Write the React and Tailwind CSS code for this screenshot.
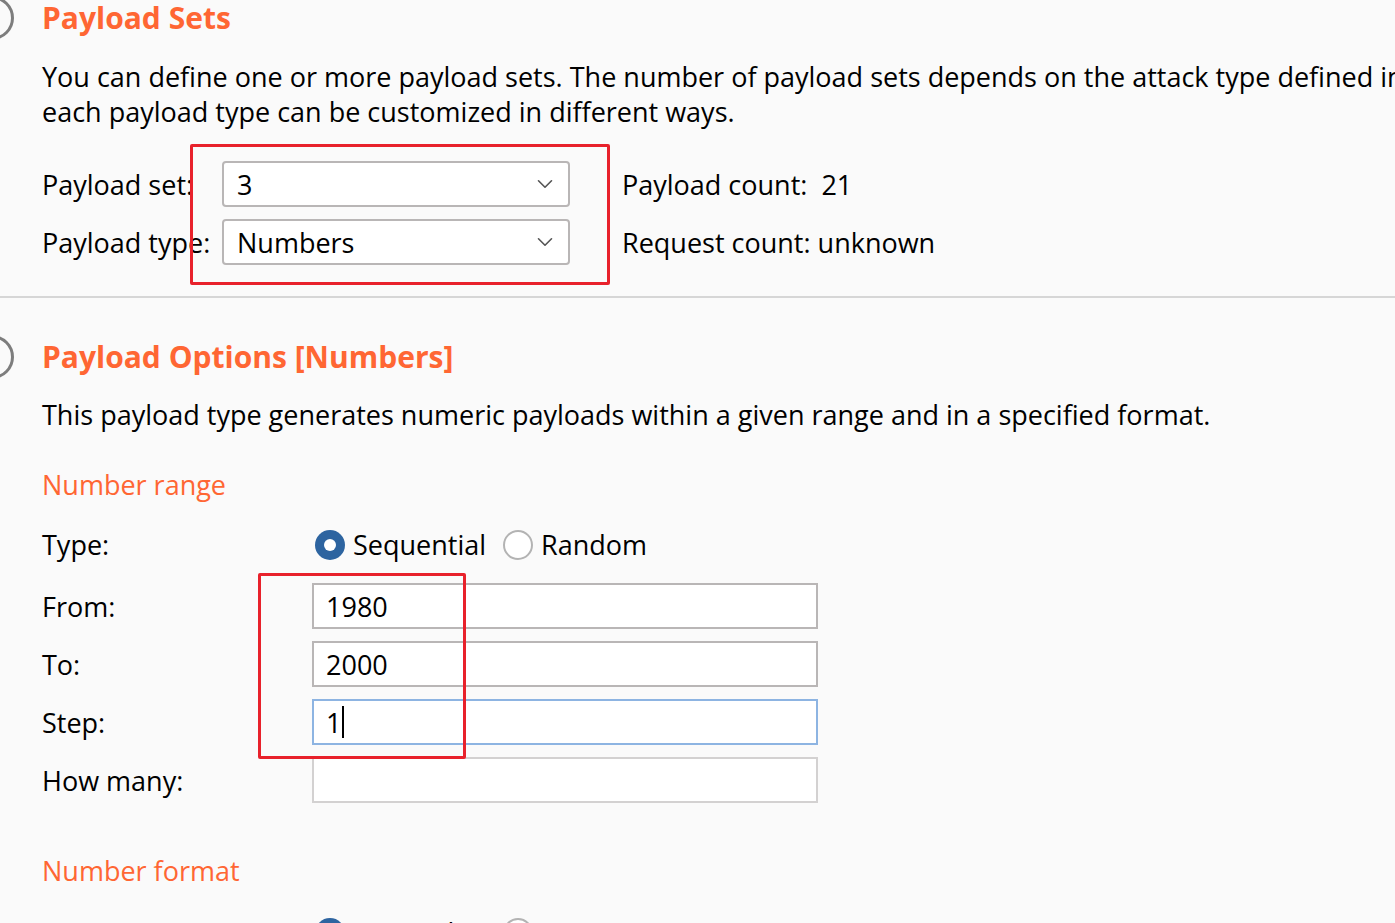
import { ChevronDown } from "lucide-react";

const font = { fontFamily: '"Open Sans", "Noto Sans", sans-serif' };

function SectionHeading({ children }) {
  return (
    <h2 className="relative text-[30px] font-bold leading-[36px] text-[#ff6633]">
      <span className="absolute left-[-72px] top-[-4px] h-[44px] w-[44px] rounded-full border-[3px] border-[#7d7d7d]" />
      {children}
    </h2>
  );
}

function Select({ value }) {
  return (
    <div className="flex h-[46px] w-[348px] items-center justify-between rounded-[4px] border-2 border-[#b9b6b6] bg-white pl-[13px] pr-[10px]">
      <span>{value}</span>
      <ChevronDown className="h-[26px] w-[26px] text-[#555]" strokeWidth={1.5} />
    </div>
  );
}

function Field({ label, value, focused, disabled, caret }) {
  const border = focused
    ? "border-[#8db4e2]"
    : disabled
    ? "border-[#d3d1d1]"
    : "border-[#b9b6b6]";
  return (
    <div className="flex items-center">
      <div className="w-[270px]">{label}</div>
      <div className={`flex h-[46px] w-[506px] items-center border-2 bg-white pl-[12px] ${border}`}>
        <span>{value}</span>
        {caret && <span className="ml-[1px] h-[32px] w-[2px] bg-black" />}
      </div>
    </div>
  );
}

function Radio({ checked, label }) {
  return (
    <label className="flex items-center gap-[8px]">
      {checked ? (
        <span className="flex h-[30px] w-[30px] shrink-0 items-center justify-center rounded-full bg-[#2d64a0]">
          <span className="h-[12px] w-[12px] rounded-full bg-white" />
        </span>
      ) : (
        <span className="h-[30px] w-[30px] shrink-0 rounded-full border-2 border-[#b3b3b3] bg-white" />
      )}
      <span className="whitespace-nowrap">{label}</span>
    </label>
  );
}

function RadioRow({ label, first, second }) {
  return (
    <div className="flex h-[35px] items-center">
      <div className="w-[273px]">{label}</div>
      <div className="grid grid-cols-[188px_auto] items-center">
        <Radio checked label={first} />
        <Radio label={second} />
      </div>
    </div>
  );
}

export default function App() {
  return (
    <div
      className="relative h-[923px] w-[1395px] overflow-hidden bg-[#fafafa] text-[27px] leading-[35px] text-black"
      style={font}
    >
      {/* Payload Sets */}
      <section className="px-[42px]">
        <SectionHeading>Payload Sets</SectionHeading>
        <p className="mt-[23px] whitespace-nowrap">
          You can define one or more payload sets. The number of payload sets depends on the attack type defined in the Positions tab.
          <br />
          each payload type can be customized in different ways.
        </p>

        <div className="relative mt-[32px] flex">
          <div className="flex flex-col gap-[12px]">
            <div className="flex items-center">
              <div className="w-[180px] whitespace-nowrap">Payload set:</div>
              <Select value="3" />
            </div>
            <div className="flex items-center">
              <div className="w-[180px] whitespace-nowrap">Payload type:</div>
              <Select value="Numbers" />
            </div>
          </div>
          <div className="ml-[52px] flex flex-col gap-[12px]">
            <div className="flex h-[46px] items-center whitespace-pre">Payload count:  21</div>
            <div className="flex h-[46px] items-center">Request count: unknown</div>
          </div>
          {/* annotation */}
          <div className="absolute left-[148px] top-[-17px] h-[141px] w-[420px] rounded-[2px] border-[3px] border-[#e8212b]" />
        </div>
      </section>

      <div className="mt-[31px] h-[2px] w-full bg-[#d6d6d6]" />

      {/* Payload Options */}
      <section className="mt-[41px] px-[42px]">
        <SectionHeading>Payload Options [Numbers]</SectionHeading>
        <p className="mt-[22px]">
          This payload type generates numeric payloads within a given range and in a specified format.
        </p>

        <h3 className="mt-[35px] text-[#ff6633]">Number range</h3>

        <div className="mt-[25px]">
          <RadioRow label="Type:" first="Sequential" second="Random" />
        </div>

        <div className="relative mt-[21px] flex flex-col gap-[12px]">
          <Field label="From:" value="1980" />
          <Field label="To:" value="2000" />
          <Field label="Step:" value="1" focused caret />
          <Field label="How many:" value="" disabled />
          <div className="absolute left-[216px] top-[-10px] h-[186px] w-[208px] rounded-[2px] border-[3px] border-[#e8212b]" />
        </div>

        <h3 className="mt-[50px] text-[#ff6633]">Number format</h3>

        <div className="mt-[27px]">
          <RadioRow label="Base:" first="Decimal" second="Hex" />
        </div>
      </section>
    </div>
  );
}
